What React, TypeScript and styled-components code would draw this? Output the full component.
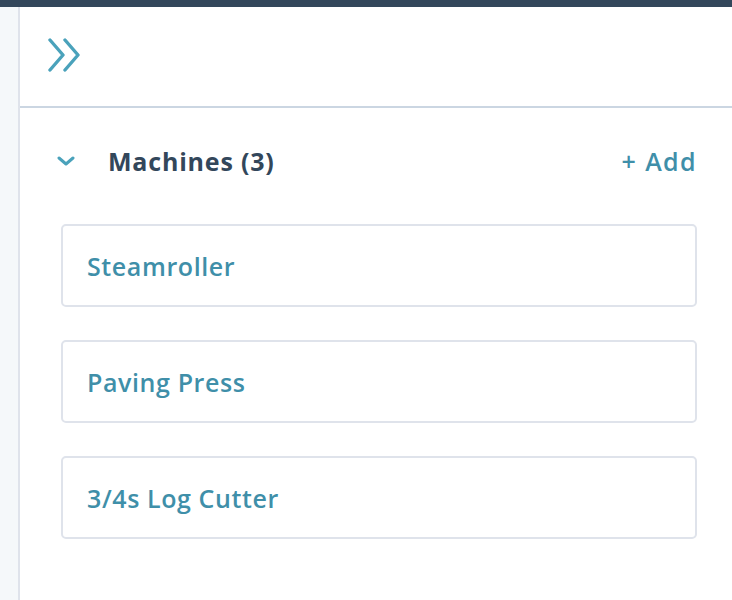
import styled, { createGlobalStyle } from "styled-components";

const GlobalStyle = createGlobalStyle`
  html, body {
    margin: 0;
    padding: 0;
    background: #ffffff;
  }
  body {
    font-family: "Open Sans", "Noto Sans", sans-serif;
  }
`;

const TopBar = styled.div`
  height: 7px;
  background: #33475b;
`;

const Shell = styled.div`
  display: flex;
  height: 593px;
`;

const Gutter = styled.div`
  width: 18px;
  flex: none;
  background: #f5f8fa;
  border-right: 2px solid #dfe3eb;
`;

const Panel = styled.main`
  flex: 1;
  display: flex;
  flex-direction: column;
`;

const PanelHeader = styled.header`
  height: 101px;
  display: flex;
  align-items: flex-start;
  padding: 31px 0 0 28px;
  box-sizing: border-box;
  border-bottom: 2px solid #cbd6e2;
`;

const IconButton = styled.button`
  border: 0;
  background: none;
  padding: 0;
  cursor: pointer;
  display: flex;
`;

const Section = styled.section`
  padding: 36px 35px 0 41px;
`;

const SectionHead = styled.div`
  display: flex;
  align-items: center;
  height: 34px;
  margin-bottom: 46px;
`;

const Toggle = styled.span`
  width: 47px;
  display: flex;
  align-items: center;
  margin-left: -4px;
  padding-right: 4px;
`;

const Title = styled.h2`
  margin: 0;
  flex: 1;
  font-size: 25px;
  font-weight: 700;
  color: #33475b;
  letter-spacing: 0.8px;
`;

const AddLink = styled.a`
  font-size: 25px;
  font-weight: 600;
  color: #3f8fa9;
  text-decoration: none;
  letter-spacing: 1.4px;
`;

const CardList = styled.ul`
  list-style: none;
  margin: 0;
  padding: 0;
  display: flex;
  flex-direction: column;
  gap: 33px;
`;

const Card = styled.li`
  height: 83px;
  box-sizing: border-box;
  border: 2px solid #dfe3eb;
  border-radius: 5px;
  display: flex;
  align-items: center;
  padding: 0 24px;
  font-size: 25px;
  font-weight: 600;
  color: #3f8fa9;
  letter-spacing: 0.6px;
`;

const machines = ["Steamroller", "Paving Press", "3/4s Log Cutter"];

export default function App() {
  return (
    <>
      <GlobalStyle />
      <TopBar />
      <Shell>
        <Gutter />
        <Panel>
          <PanelHeader>
            <IconButton aria-label="Expand">
              <svg width="34" height="34" viewBox="0 0 34 34" fill="none">
                <path
                  d="M2 2 L15 17 L2 32 M17 2 L30 17 L17 32"
                  stroke="#4aa2bb"
                  strokeWidth="3.4"
                  strokeLinecap="round"
                  strokeLinejoin="round"
                />
              </svg>
            </IconButton>
          </PanelHeader>
          <Section>
            <SectionHead>
              <Toggle>
                <svg width="18" height="10" viewBox="0 0 18 10" fill="none">
                  <path
                    d="M2 2 L9 8 L16 2"
                    stroke="#4aa2bb"
                    strokeWidth="3"
                    strokeLinecap="round"
                    strokeLinejoin="round"
                  />
                </svg>
              </Toggle>
              <Title>Machines (3)</Title>
              <AddLink href="#">+ Add</AddLink>
            </SectionHead>
            <CardList>
              {machines.map((m) => (
                <Card key={m}>{m}</Card>
              ))}
            </CardList>
          </Section>
        </Panel>
      </Shell>
    </>
  );
}
